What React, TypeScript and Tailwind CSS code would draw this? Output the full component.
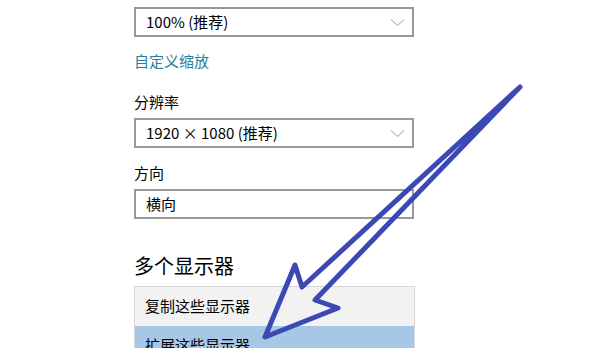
import React from 'react'

const font = { fontFamily: '"Noto Sans CJK SC", "Noto Sans", sans-serif' }

function Chevron() {
  return (
    <svg width="15" height="9" viewBox="0 0 15 9" className="shrink-0">
      <path d="M1 1.5 L7.5 7.5 L14 1.5" fill="none" stroke="#9a9a9a" strokeWidth="1" />
    </svg>
  )
}

function Select({ value, chevron = true }: { value: string; chevron?: boolean }) {
  return (
    <div className="flex h-[30px] w-[280px] items-center justify-between border-2 border-[#999999] bg-white pl-[10px] pr-[7px]">
      <span className="text-[15px] leading-5 text-black">{value}</span>
      {chevron && <Chevron />}
    </div>
  )
}

export default function App() {
  return (
    <div className="relative h-[348px] w-[600px] overflow-hidden bg-white" style={font}>
      <div className="flex flex-col items-start pl-[134px] pt-[7px]">
        <Select value="100% (推荐)" />

        <span className="mt-[14px] text-[15px] leading-5 text-[#2b7f99]">自定义缩放</span>

        <span className="mt-[21px] text-[15px] leading-5 text-black">分辨率</span>
        <div className="mt-[6px]">
          <Select value="1920 × 1080 (推荐)" />
        </div>

        <span className="mt-[15px] text-[15px] leading-5 text-black">方向</span>
        <div className="mt-[6px]">
          <Select value="横向" chevron={false} />
        </div>

        <h2 className="mt-[33px] text-[20px] leading-7 text-black">多个显示器</h2>

        <div className="mt-[6px] flex w-[281px] flex-col border border-[#d6d6d6] bg-[#f2f2f2]">
          <div className="flex h-[39px] items-center pl-[10px] text-[15px] text-black">复制这些显示器</div>
          <div className="flex h-[38px] items-center bg-[#a6c7e5] pl-[10px] text-[15px] text-black">扩展这些显示器</div>
        </div>
      </div>

      {/* hand-drawn arrow annotation */}
      <svg className="pointer-events-none absolute left-0 top-0" width="600" height="348" viewBox="0 0 600 348">
        <polygon
          points="520,87 302,287 295,265 265,337 338,308 315,300"
          fill="none"
          stroke="#3c49b5"
          strokeWidth="5"
          strokeLinejoin="round"
          strokeLinecap="round"
        />
      </svg>
    </div>
  )
}
